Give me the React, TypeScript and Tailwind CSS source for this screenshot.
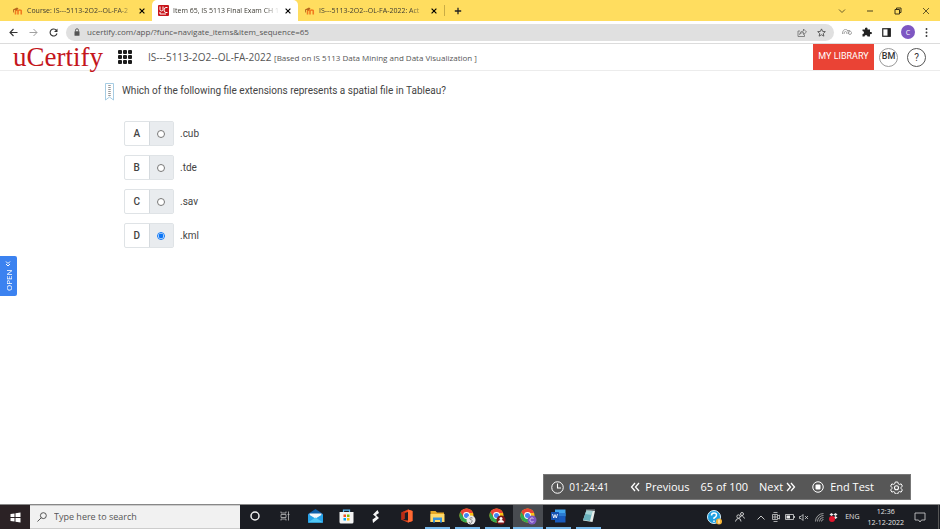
import { FC, ReactNode, useState } from "react";
import clsx from "clsx";

type SvgProps = { className?: string };

const MoodleIcon: FC = () => (
  <svg viewBox="0 0 22 16" className="h-[8px] w-[11px] shrink-0">
    <path d="M7 15V9q0-3 2.500-3T12 9v6M12 9q0-3 3.500-3T18.500 9v6" fill="none" stroke="#f27b1f" strokeWidth="3.200" />
    <path d="M2 5l8-4 3 2-4 4-5-1v5H2.500z" fill="#b5651d" />
  </svg>
);

const UcIcon: FC = () => (
  <svg viewBox="0 0 22 22" className="h-[11px] w-[11px] shrink-0">
    <rect width="22" height="22" rx="2" fill="#c8151b" />
    <path d="M4 3v6q0 3 3 3t3-3V3M19 5h-3q-4 0-4 5t4 5h3M4 14v4h12" fill="none" stroke="#fff" strokeWidth="2" />
  </svg>
);

const CloseIcon: FC<SvgProps> = ({ className }) => (
  <svg viewBox="0 0 10 10" className={className}>
    <path d="M1 1l8 8M9 1L1 9" stroke="currentColor" strokeWidth="1.900" fill="none" />
  </svg>
);

const Chrome: FC<{ badge: string; label?: string }> = ({ badge, label }) => (
  <svg viewBox="0 0 34 34" className="h-[17px] w-[17px]">
    <circle cx="15" cy="15" r="14" fill="#fbc116" />
    <path d="M2.900 8A14 14 0 0 0 15 29l4-9-8-3z" fill="#2fa84f" />
    <path d="M2.900 8L9 18l6-8h13.200a14 14 0 0 0-25.300-2z" fill="#ea4335" />
    <circle cx="15" cy="15" r="6.800" fill="#fff" />
    <circle cx="15" cy="15" r="5" fill="#4285f4" />
    <circle cx="24" cy="24" r="9" fill={badge} />
    {label === "C" && <path d="M27 21a4.200 4.200 0 1 0 0 6" fill="none" stroke="#ddd0f5" strokeWidth="1.800" />}
    {label === "person" && (
      <g fill="#fff">
        <circle cx="24" cy="21" r="3" />
        <path d="M18 29q0-5 6-5t6 5z" />
      </g>
    )}
    {label === "S" && <path d="M27 20q-5-2-5 1t3 3 0 5-5-1" fill="none" stroke="#777" strokeWidth="1.800" />}
  </svg>
);

const tabs = [
  { title: "Course: IS---5113-2O2--OL-FA-2", active: false },
  { title: "Item 65, IS 5113 Final Exam CH 1", active: true },
  { title: "IS---5113-2O2--OL-FA-2022: Act", active: false },
];

const TabStrip: FC = () => (
  <div className="flex h-[21px] items-stretch bg-[#ffdd5f] pl-[6px] text-[#3c3a32]">
    {tabs.map((tab) => (
      <div
        key={tab.title}
        className={clsx(
          "flex w-[146px] shrink-0 items-center pr-[7px] pl-[6px]",
          tab.active && "rounded-t-[5px] bg-white"
        )}
      >
        {tab.active ? <UcIcon /> : <MoodleIcon />}
        <span className="ml-1 flex-1 mask-r-from-85% whitespace-nowrap text-[7px] leading-[10px]">
          {tab.title}
        </span>
        <button aria-label="Close tab" className="ml-[5px]">
          <CloseIcon className="h-[6px] w-[6px] text-black" />
        </button>
      </div>
    ))}
    <button aria-label="New tab" className="my-[5px] border-l border-[#c9ac45] pl-[9px]">
      <svg viewBox="0 0 10 10" className="h-[8px] w-[8px]">
        <path d="M5 1v8M1 5h8" stroke="#222" strokeWidth="1.600" />
      </svg>
    </button>
    <div className="ml-auto flex items-center gap-[20px] pr-[10px]">
      <button aria-label="Search tabs">
        <svg viewBox="0 0 16 16" className="h-[8px] w-[8px]">
          <path d="M2 5l6 6 6-6" fill="none" stroke="#6b5d28" strokeWidth="2" />
        </svg>
      </button>
      <button aria-label="Minimize">
        <svg viewBox="0 0 16 16" className="h-[8px] w-[8px]">
          <path d="M2 8h12" stroke="#4a411e" strokeWidth="2" />
        </svg>
      </button>
      <button aria-label="Restore">
        <svg viewBox="0 0 16 16" className="h-[8px] w-[8px]">
          <path d="M2 5h9v9H2zM5 5V2h9v9h-3" fill="none" stroke="#3a3318" strokeWidth="2" />
        </svg>
      </button>
      <button aria-label="Close window">
        <svg viewBox="0 0 16 16" className="h-[8px] w-[8px]">
          <path d="M2 2l12 12M14 2L2 14" stroke="#4a411e" strokeWidth="1.700" />
        </svg>
      </button>
    </div>
  </div>
);

const AddressBar: FC = () => (
  <div className="flex h-[23px] items-center border-b border-[#dcdcdc] bg-white pr-[12px] pl-[9px]">
    <div className="flex items-center gap-[11px]">
      <button aria-label="Back">
        <svg viewBox="0 0 18 18" className="h-[9px] w-[9px]">
          <path d="M17 9H2M9 2L2 9l7 7" fill="none" stroke="#333" strokeWidth="2.200" />
        </svg>
      </button>
      <button aria-label="Forward">
        <svg viewBox="0 0 18 18" className="h-[9px] w-[9px]">
          <path d="M1 9h15M9 2l7 7-7 7" fill="none" stroke="#a0a0a0" strokeWidth="2" />
        </svg>
      </button>
      <button aria-label="Reload">
        <svg viewBox="0 0 18 18" className="h-[9px] w-[9px]">
          <path d="M15 5a7 7 0 1 0 1 6" fill="none" stroke="#333" strokeWidth="2.200" />
          <path d="M17 1v7h-7z" fill="#333" />
        </svg>
      </button>
    </div>
    <div className="ml-[8px] flex h-[17px] flex-1 items-center rounded-full bg-[#e0e0e0] px-[8px]">
      <svg viewBox="0 0 12 16" className="h-[8px] w-[6px] shrink-0">
        <path d="M3 7V4.500a3 3 0 0 1 6 0V7" fill="none" stroke="#555" strokeWidth="1.800" />
        <rect x="1" y="6.500" width="10" height="9" rx="1" fill="#555" />
      </svg>
      <input
        aria-label="Address"
        readOnly
        value="ucertify.com/app/?func=navigate_items&item_sequence=65"
        className="ml-[7px] min-w-0 flex-1 bg-transparent text-[8px] leading-[12px] text-[#555] outline-none"
      />
      <button aria-label="Share">
        <svg viewBox="0 0 20 18" className="h-[9px] w-[10px]">
          <path d="M6 6H2v11h13v-4M5 13q1-7 8-7V2l6 6-6 5V9q-5 0-8 4z" fill="none" stroke="#666" strokeWidth="1.500" />
        </svg>
      </button>
      <button aria-label="Bookmark" className="ml-[10px]">
        <svg viewBox="0 0 20 20" className="h-[9px] w-[9px]">
          <path d="M10 2l2.500 5.500 6 .6-4.500 4 1.300 6L10 15l-5.300 3.100 1.300-6-4.500-4 6-.6z" fill="none" stroke="#444" strokeWidth="1.800" />
        </svg>
      </button>
    </div>
    <div className="ml-[8px] flex items-center gap-[10px]">
      <svg viewBox="0 0 20 16" className="h-[8px] w-[10px]">
        <path d="M1 12q0-9 6-9t6 9M4 12q0-5 3-5t3 5M10 5q7-2 9 4 0 4-3 4t-3-3 3-3" fill="none" stroke="#999" strokeWidth="1.800" />
      </svg>
      <svg viewBox="0 0 20 20" className="h-[10px] w-[10px]">
        <path d="M1 5h5q-1-4 2.500-4T11 5h5v5q4-1 4 2t-4 2v5h-5q0-3-3-3t-3 3H1v-5q3 0 3-3T1 8z" fill="#222" />
      </svg>
      <svg viewBox="0 0 18 18" className="h-[9px] w-[9px]">
        <rect x="1.500" y="1.500" width="15" height="15" fill="none" stroke="#222" strokeWidth="2.400" />
        <path d="M11 1h6v16h-6z" fill="#222" />
      </svg>
      <span className="flex h-[14px] w-[14px] items-center justify-center rounded-full bg-[#7e57c2] text-[7px] leading-none text-white">
        C
      </span>
      <svg viewBox="0 0 4 18" className="h-[9px] w-[3px]">
        <g fill="#333">
          <circle cx="2" cy="2" r="1.900" />
          <circle cx="2" cy="9" r="1.900" />
          <circle cx="2" cy="16" r="1.900" />
        </g>
      </svg>
    </div>
  </div>
);

const Header: FC = () => (
  <header className="flex h-[27px] items-center border-b border-[#ececec] bg-white pr-[14px] pl-[13px]">
    <a
      href="#home"
      className="font-['Liberation_Serif',serif] text-[27px] leading-[26px] text-[#c4161c]"
    >
      uCertify
    </a>
    <button aria-label="Apps" className="ml-[15px] grid grid-cols-3 gap-px">
      {Array.from({ length: 9 }, (_, i) => (
        <span key={i} className="h-[4px] w-[4px] rounded-[1px] bg-[#1b1b1b]" />
      ))}
    </button>
    <h1 className="ml-[16px] text-[10px] leading-[14px] whitespace-nowrap text-[#555]">
      IS---5113-2O2--OL-FA-2022{" "}
      <span className="text-[8px]">[Based on IS 5113 Data Mining and Data Visualization ]</span>
    </h1>
    <div className="ml-auto flex items-center self-stretch font-[Roboto,sans-serif]">
      <button className="w-[61px] self-stretch bg-[#ea4335] text-[9px] whitespace-nowrap text-white">
        MY LIBRARY
      </button>
      <button className="ml-[5px] flex h-[19px] w-[19px] items-center justify-center rounded-full border border-[#999] text-[9px] font-medium text-[#333]">
        BM
      </button>
      <button
        aria-label="Help"
        className="ml-[9px] flex h-[19px] w-[19px] items-center justify-center rounded-full border border-[#555] text-[10px] text-[#333]"
      >
        ?
      </button>
    </div>
  </header>
);

const options = [
  { letter: "A", text: ".cub" },
  { letter: "B", text: ".tde" },
  { letter: "C", text: ".sav" },
  { letter: "D", text: ".kml" },
];

const Question: FC = () => {
  const [answer, setAnswer] = useState("D");

  return (
    <section className="flex items-start px-[105px] pt-[12px] font-[Roboto,sans-serif] text-[#444]">
      <svg viewBox="0 0 18 36" className="h-[18px] w-[9px] shrink-0">
        <path d="M1 1h16v33l-8-6-8 6z" fill="#fff" stroke="#8fbfdc" strokeWidth="1.600" />
        <path d="M9 4v22" stroke="#999" strokeWidth="5" strokeDasharray="2 2" />
      </svg>
      <fieldset className="ml-[8px]">
        <legend className="text-[10px] leading-[15px]">
          Which of the following file extensions represents a spatial file in Tableau?
        </legend>
        <div className="mt-[23px] ml-[2px] flex flex-col gap-[9px]">
          {options.map((option) => (
            <label key={option.letter} className="flex items-center text-[10px] leading-[15px]">
              <span className="flex h-[25px] w-[50px] rounded-[2px] border border-[#dfe3e6]">
                <span className="flex flex-1 items-center justify-center font-medium">
                  {option.letter}
                </span>
                <span className="flex flex-1 items-center justify-center border-l border-[#d5dade] bg-[#e9ecef]">
                  <input
                    type="radio"
                    name="answer"
                    value={option.letter}
                    checked={answer === option.letter}
                    onChange={() => setAnswer(option.letter)}
                    className="h-[8px] w-[8px] accent-[#0b75f5]"
                  />
                </span>
              </span>
              <span className="ml-[6px]">{option.text}</span>
            </label>
          ))}
        </div>
      </fieldset>
    </section>
  );
};

const TestBar: FC = () => (
  <nav className="mt-auto mr-[29px] mb-[4px] flex h-[26px] items-center self-end border border-[#777] bg-[#575757] px-[7px] text-[11px] leading-[16px] whitespace-nowrap text-white">
    <svg viewBox="0 0 26 26" className="h-[13px] w-[13px]">
      <circle cx="13" cy="13" r="11.500" fill="none" stroke="#fff" strokeWidth="2" />
      <path d="M13 5v9h7" fill="none" stroke="#fff" strokeWidth="2.200" />
    </svg>
    <span className="ml-[5px] w-[41px] text-[10px]">01:24:41</span>
    <button className="ml-[20px] flex items-center">
      <svg viewBox="0 0 20 20" className="mr-[5px] h-[10px] w-[10px]">
        <path d="M10 2l-7 8 7 8M18 2l-7 8 7 8" fill="none" stroke="#fff" strokeWidth="2.600" />
      </svg>
      Previous
    </button>
    <span className="ml-[11px]">65 of 100</span>
    <button className="ml-[11px] flex items-center">
      Next
      <svg viewBox="0 0 20 20" className="ml-[3px] h-[10px] w-[10px]">
        <path d="M2 2l7 8-7 8M10 2l7 8-7 8" fill="none" stroke="#fff" strokeWidth="2.600" />
      </svg>
    </button>
    <button className="ml-[16px] flex items-center">
      <svg viewBox="0 0 24 24" className="mr-[6px] h-[12px] w-[12px]">
        <circle cx="12" cy="12" r="10.500" fill="none" stroke="#fff" strokeWidth="2" />
        <rect x="7" y="7" width="10" height="10" rx="2" fill="#fff" />
      </svg>
      End Test
    </button>
    <button aria-label="Settings" className="ml-[16px]">
      <svg viewBox="0 0 26 26" className="h-[13px] w-[13px]">
        <path
          d="M10.500 2h5l1 3.500 2.300 1.300 3.500-1 2.500 4.300-2.600 2.600v2.600l2.600 2.600-2.500 4.300-3.500-1-2.300 1.300-1 3.500h-5l-1-3.500-2.300-1.300-3.500 1-2.500-4.300 2.600-2.600v-2.600L1.200 10.100l2.500-4.300 3.500 1 2.300-1.300z"
          fill="none"
          stroke="#fff"
          strokeWidth="2"
        />
        <circle cx="13" cy="13.500" r="4" fill="none" stroke="#fff" strokeWidth="2.200" />
      </svg>
    </button>
  </nav>
);

const apps: { name: string; running?: boolean; active?: boolean; icon: ReactNode }[] = [
  {
    name: "Cortana",
    icon: (
      <svg viewBox="0 0 20 20" className="h-[10px] w-[10px]">
        <circle cx="10" cy="10" r="8" fill="none" stroke="#eee" strokeWidth="3" />
      </svg>
    ),
  },
  {
    name: "Task View",
    icon: (
      <svg viewBox="0 0 20 20" className="h-[10px] w-[10px]">
        <path d="M2 1v3h10V1M2 19v-3h10v3M2 7h10v6H2zM17 1v18M15 7h4" fill="none" stroke="#bbb" strokeWidth="1.600" />
      </svg>
    ),
  },
  {
    name: "Mail",
    icon: (
      <svg viewBox="0 0 30 28" className="h-[14px] w-[15px]">
        <path d="M0 10L15 0l15 10v17H0z" fill="#0f5fa8" />
        <path d="M3 9h24v12H3z" fill="#f3f8fc" />
        <path d="M0 10l15 9 15-9v17H0z" fill="#28a3e8" />
        <path d="M0 27l15-10 15 10z" fill="#50c8f5" />
      </svg>
    ),
  },
  {
    name: "Store",
    icon: (
      <svg viewBox="0 0 30 30" className="h-[15px] w-[15px]">
        <path d="M9 7V2h12v5" fill="none" stroke="#5ab8ef" strokeWidth="2.500" />
        <path d="M1 6h28v20q0 3-3 3H4q-3 0-3-3z" fill="#f4f4f4" />
        <path d="M9 11h5v5H9z" fill="#f25022" />
        <path d="M16 11h5v5h-5z" fill="#7fba00" />
        <path d="M9 18h5v5H9z" fill="#00a4ef" />
        <path d="M16 18h5v5h-5z" fill="#ffb900" />
      </svg>
    ),
  },
  {
    name: "Launcher",
    icon: (
      <svg viewBox="0 0 16 26" className="h-[13px] w-[8px]">
        <path d="M11 0L2 9l6 5-7 5 1 7 12-10-6-6 6-4z" fill="#f5f5f5" />
      </svg>
    ),
  },
  {
    name: "Office",
    icon: (
      <svg viewBox="0 0 24 28" className="h-[14px] w-[12px]">
        <path
          fillRule="evenodd"
          d="M1 7l13-6 9 3v20l-9 3-12-5 12 1V6L7 8v12l-6 2z"
          fill="#e8431c"
        />
        <path d="M14 1l9 3v20l-9 3z" fill="#ff6a33" />
        <path d="M1 7l6-3v16l-6 2z" fill="#b92b14" />
      </svg>
    ),
  },
  {
    name: "File Explorer",
    running: true,
    icon: (
      <svg viewBox="0 0 30 26" className="h-[13px] w-[15px]">
        <path d="M1 2h10l3 3h14v19H1z" fill="#e5a826" />
        <path d="M1 8h28v16H1z" fill="#ffd96a" />
        <path d="M6 15h18v10h-4v-5H10v5H6z" fill="#3a95dc" />
      </svg>
    ),
  },
  { name: "Chrome S", running: true, icon: <Chrome badge="#e9e9e9" label="S" /> },
  { name: "Chrome work", running: true, icon: <Chrome badge="#7b1518" label="person" /> },
  { name: "Chrome C", running: true, active: true, icon: <Chrome badge="#7e57c2" label="C" /> },
  {
    name: "Word",
    running: true,
    icon: (
      <svg viewBox="0 0 30 28" className="h-[14px] w-[15px]">
        <path d="M8 1h21v13H8z" fill="#41a5ee" />
        <path d="M8 8h21v7H8z" fill="#2b7cd3" />
        <path d="M8 14h21v13H8z" fill="#185abd" />
        <rect y="6" width="16" height="16" rx="1" fill="#1552b0" />
        <path d="M3 10l2.500 8L8 11l2.500 7 2.500-8" fill="none" stroke="#fff" strokeWidth="1.700" />
      </svg>
    ),
  },
  {
    name: "Notepad",
    running: true,
    icon: (
      <svg viewBox="0 0 28 28" className="h-[14px] w-[14px]">
        <path d="M9 2l17 2-5 22-19-3z" fill="#e5ecea" />
        <path d="M9 3l12 1-5 20-14-2z" fill="#69b1bd" />
        <path d="M9 3l12 1-2 8-12-2z" fill="#a3d3d6" />
        <path d="M8 2h18" stroke="#8d9799" strokeWidth="2" />
      </svg>
    ),
  },
];

const Tray: FC = () => (
  <div className="ml-auto flex items-center text-[#e4e4e4]">
    <svg viewBox="0 0 30 30" className="h-[15px] w-[15px]">
      <circle cx="14" cy="14" r="13" fill="#1d9fe0" stroke="#d9f0fb" strokeWidth="2" />
      <path d="M9 11q0-5 5-5t5 4-5 6v2M14 21v3" fill="none" stroke="#fff" strokeWidth="3" />
      <circle cx="24" cy="23" r="6" fill="#f5b335" />
      <path d="M24 19v8" stroke="#fff" strokeWidth="2" />
    </svg>
    <svg viewBox="0 0 20 20" className="ml-[13px] h-[10px] w-[10px]">
      <path d="M1 19q1-6 6-6t5 6M10 10q3-3 5-2t4 5" fill="none" stroke="#ddd" strokeWidth="1.800" />
      <circle cx="7" cy="9" r="3.300" fill="none" stroke="#ddd" strokeWidth="1.800" />
      <circle cx="14" cy="4" r="3" fill="none" stroke="#ddd" strokeWidth="1.800" />
    </svg>
    <svg viewBox="0 0 16 10" className="ml-[12px] h-[5px] w-[8px]">
      <path d="M1 9l7-7 7 7" fill="none" stroke="#ddd" strokeWidth="1.800" />
    </svg>
    <svg viewBox="0 0 16 20" className="ml-[7px] h-[10px] w-[8px]">
      <path d="M3 1h8M3 19h8M1 5h10v10H1zM11 8l4-2v8l-4-2M4 8h4v4H4z" fill="none" stroke="#ccc" strokeWidth="1.600" />
    </svg>
    <svg viewBox="0 0 20 12" className="ml-[5px] h-[6px] w-[10px]">
      <path d="M1 1h16v10H1zM19 4v4" fill="none" stroke="#ddd" strokeWidth="1.600" />
      <path d="M3 3h7v6H3z" fill="#eee" />
    </svg>
    <svg viewBox="0 0 20 14" className="ml-[4px] h-[7px] w-[10px]">
      <path d="M1 5h3l4-4v12L4 9H1zM12 4l6 6M18 4l-6 6" fill="none" stroke="#ddd" strokeWidth="1.500" />
    </svg>
    <svg viewBox="0 0 18 18" className="ml-[6px] h-[9px] w-[9px]">
      <path d="M1 17A16 16 0 0 1 17 1M5 17A12 12 0 0 1 17 5M9 17a8 8 0 0 1 8-8M13 17a4 4 0 0 1 4-4" fill="none" stroke="#aaa" strokeWidth="1.800" />
    </svg>
    <svg viewBox="0 0 18 18" className="ml-[5px] h-[9px] w-[9px]">
      <path d="M5 0l4 3-4 3-4-3zM13 0l4 3-4 3-4-3zM13 6l4 3-4 3-4-3z" fill="#eee" />
      <circle cx="6" cy="12" r="6" fill="#e3152c" />
    </svg>
    <span className="ml-[7px] text-[7px] leading-[10px]">ENG</span>
    <div className="ml-[8px] text-center text-[7px] leading-[11px]">
      <div>12:36</div>
      <div>12-12-2022</div>
    </div>
    <button aria-label="Notifications" className="ml-[10px]">
      <svg viewBox="0 0 24 22" className="h-[11px] w-[12px]">
        <path d="M2 2h20v14h-7l-3 4-3-4H2z" fill="none" stroke="#ccc" strokeWidth="1.700" />
      </svg>
    </button>
    <span className="ml-[12px] w-[2px] self-stretch border-l border-[#555]" />
  </div>
);

const Taskbar: FC = () => (
  <footer className="flex h-[25px] shrink-0 border-t border-[#888] bg-[#1b1d23]">
    <button aria-label="Start" className="flex w-[30px] shrink-0 items-center justify-center bg-[#2b2225]">
      <svg viewBox="0 0 22 22" className="h-[11px] w-[11px]">
        <path d="M1 4l8-1v7H1zM11 2.700L21 1v9H11zM1 12h8v7l-8-1zM11 12h10v9l-10-1.700z" fill="#fff" />
      </svg>
    </button>
    <label className="flex w-[210px] shrink-0 items-center border-y border-[#ccc] bg-[#f1f1f1] px-[7px]">
      <svg viewBox="0 0 22 22" className="h-[10px] w-[10px] shrink-0">
        <circle cx="14" cy="8" r="6.500" fill="none" stroke="#444" strokeWidth="2" />
        <path d="M9.500 12.500L1 21" stroke="#444" strokeWidth="2" />
      </svg>
      <input
        aria-label="Type here to search"
        placeholder="Type here to search"
        className="ml-[7px] min-w-0 flex-1 text-[9px] leading-[14px] outline-none placeholder:text-[#555]"
      />
    </label>
    <div className="flex w-[364px] shrink-0">
      {apps.map((app) => (
        <button
          key={app.name}
          aria-label={app.name}
          className={clsx("flex flex-1 flex-col items-center", app.active && "bg-[#484b51]")}
        >
          <span className="flex flex-1 items-center">{app.icon}</span>
          <span className={clsx("h-[2px]", app.active ? "w-full" : "w-[25px]", app.running && "bg-[#76b9ed]")} />
        </button>
      ))}
    </div>
    <Tray />
  </footer>
);

const App: FC = () => (
  <div className="flex min-h-screen flex-col bg-white font-['Open_Sans',sans-serif]">
    <TabStrip />
    <AddressBar />
    <Header />
    <main className="relative flex flex-1 flex-col">
      <Question />
      {/* Side drawer handle */}
      <button className="absolute top-[185px] left-0 flex h-[40px] w-[17px] rotate-180 items-center justify-center gap-[2px] rounded-l-[2px] bg-[#3b82f0] text-[8px] leading-[12px] text-white [writing-mode:vertical-rl]">
        OPEN
        <svg viewBox="0 0 12 12" className="h-[6px] w-[6px]">
          <path d="M2 6l4-4 4 4M2 11l4-4 4 4" fill="none" stroke="#fff" strokeWidth="2" />
        </svg>
      </button>
      <TestBar />
    </main>
    <Taskbar />
  </div>
);

export default App;
